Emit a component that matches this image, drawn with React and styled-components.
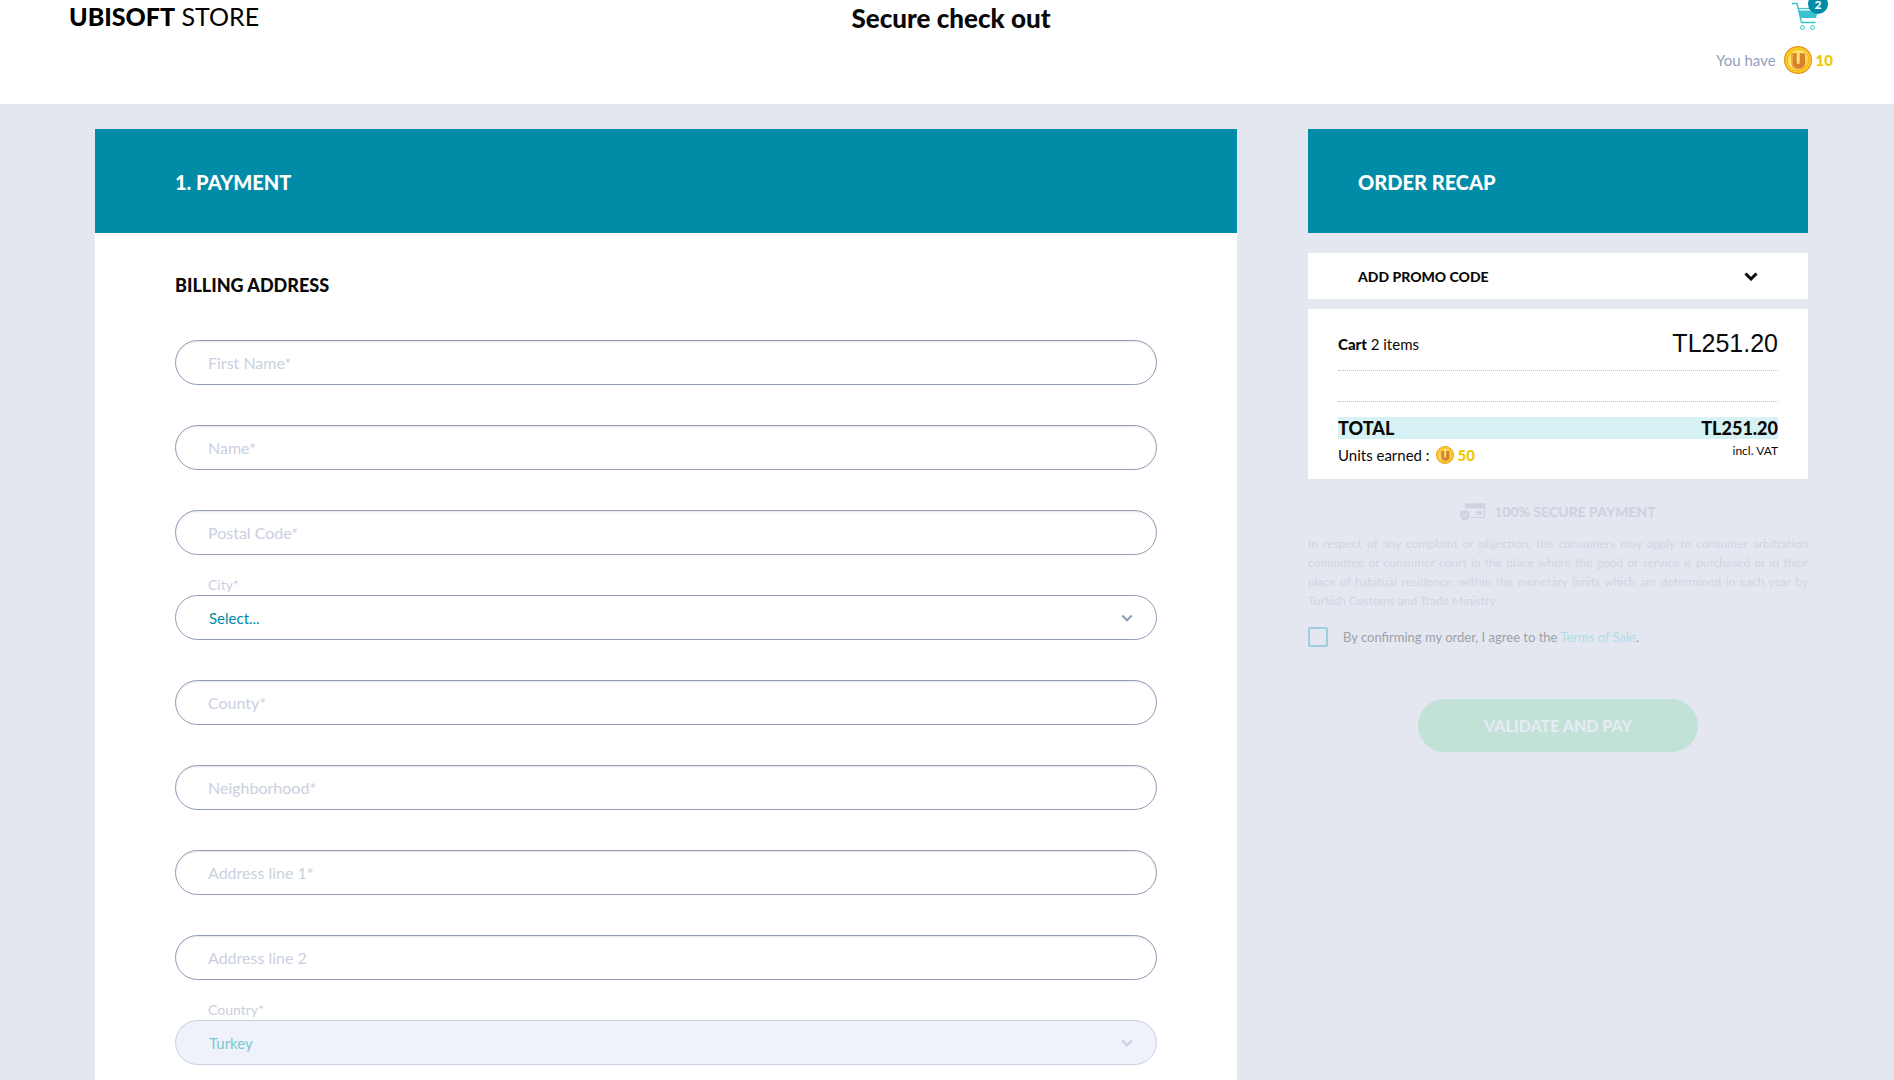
import React from "react";
import styled, { createGlobalStyle } from "styled-components";

// ============ Data ============== //
const FIELDS = [
  { id: "firstName", text: "First Name*" },
  { id: "name", text: "Name*" },
  { id: "postalCode", text: "Postal Code*" },
  { id: "city", text: "City*", options: ["Select..."] },
  { id: "county", text: "County*" },
  { id: "neighborhood", text: "Neighborhood*" },
  { id: "address1", text: "Address line 1*" },
  { id: "address2", text: "Address line 2" },
  { id: "country", text: "Country*", options: ["Turkey"], disabled: true },
];

// ============ CSS ============== //
const GlobalStyle = createGlobalStyle`
  * {
    box-sizing: border-box;
  }
  body {
    margin: 0;
    background: #e4e7f0;
    color: #0a0a0a;
    font-family: Lato, "Liberation Sans", sans-serif;
    font-size: 15px;
  }
  h1, h2, h3, p {
    margin: 0;
  }
  button, input, select {
    font-family: inherit;
  }
`;

const Header = styled.header`
  display: grid;
  grid-template-columns: 1fr auto 1fr;
  align-items: start;
  height: 104px;
  padding: 0 61px 0 69px;
  background: #fff;
`;

const Logo = styled.a`
  color: #000;
  font-size: 25px;
  line-height: 32px;
  text-decoration: none;
`;

const LogoBold = styled.span`
  font-weight: 900;
`;

const PageTitle = styled.h1`
  padding-top: 2px;
  font-size: 26px;
  font-weight: 900;
  line-height: 32px;
`;

const Account = styled.div`
  display: flex;
  flex-direction: column;
  align-items: flex-end;
  gap: 14px;
`;

const CartLink = styled.a`
  position: relative;
  display: block;
  height: 32px;
  margin-right: 15px;
`;

const Badge = styled.span`
  position: absolute;
  top: -6px;
  right: -10px;
  width: 20px;
  height: 20px;
  padding-top: 3px;
  border-radius: 50%;
  background: #008ba6;
  color: #fff;
  font-size: 12px;
  font-weight: 900;
  line-height: 16px;
  text-align: center;
`;

const Units = styled.p`
  display: flex;
  align-items: center;
  gap: 4px;
  color: #93a0bb;
`;

const UnitsText = styled.span`
  margin-right: 4px;
`;

const UnitsValue = styled.span`
  color: #eec800;
  font-weight: 900;
`;

const Main = styled.main`
  display: grid;
  grid-template-columns: minmax(0, 1fr) 500px;
  gap: 71px;
  min-height: calc(100vh - 104px);
  padding: 25px 86px 0 95px;
`;

const Card = styled.section`
  background: #fff;
`;

const Banner = styled.h2`
  display: flex;
  align-items: center;
  height: 104px;
  padding: 2px ${(props) => props.$pad} 0;
  background: #008ba6;
  color: #fff;
  font-size: 20px;
  font-weight: 900;
`;

const Form = styled.form`
  padding: 40px 80px 15px;
`;

const SubTitle = styled.h3`
  font-size: 18px;
  font-weight: 900;
  line-height: 24px;
`;

const Fields = styled.div`
  padding-top: 3px;
`;

const Field = styled.div`
  display: grid;
  grid-template-rows: 40px 45px;
`;

const Label = styled.label`
  grid-row: 1;
  align-self: end;
  padding-left: 33px;
  color: #cad0e0;
  font-size: 14px;
  line-height: 20px;
`;

const Input = styled.input`
  grid-row: 2;
  width: 100%;
  padding: 0 32px;
  border: 1px solid #919db8;
  border-radius: 23px;
  outline: none;
  background: #fff;
  box-shadow: inset 0 1px 2px rgba(0, 0, 0, 0.1);
  color: #008ba6;
  font-size: 16px;

  &::placeholder {
    color: #cad0e0;
    opacity: 1;
  }
`;

const SelectBox = styled.div`
  grid-row: 2;
  display: grid;
  align-items: center;
  color: ${(props) => (props.$disabled ? "#c9d0df" : "#919db8")};

  svg {
    grid-area: 1 / 1;
    justify-self: end;
    margin-right: 24px;
    pointer-events: none;
  }
`;

const Select = styled.select`
  grid-area: 1 / 1;
  width: 100%;
  height: 45px;
  padding: 0 33px;
  border: 1px solid ${(props) => (props.disabled ? "#c9d0df" : "#919db8")};
  border-radius: 23px;
  outline: none;
  appearance: none;
  background: ${(props) => (props.disabled ? "#eff2fa" : "#fff")};
  color: ${(props) => (props.disabled ? "#80c5d3" : "#008ba6")};
  font-size: 15px;
  opacity: 1;
`;

const PromoButton = styled.button`
  display: flex;
  align-items: center;
  justify-content: space-between;
  width: 100%;
  height: 46px;
  margin-top: 20px;
  padding: 0 50px;
  border: 0;
  background: #fff;
  color: #0a0a0a;
  font-size: 14px;
  font-weight: 900;
`;

const Recap = styled.section`
  margin-top: 10px;
  padding: 20px 30px 9px;
  background: #fff;
`;

const RecapRow = styled.div`
  display: flex;
  align-items: center;
  justify-content: space-between;
  height: 31px;
`;

const CartLine = styled(RecapRow)`
  height: 42px;
  padding-bottom: 12px;
  border-bottom: 1px dotted #7fd9df;
`;

const CartCount = styled.span`
  b {
    font-weight: 900;
  }
`;

const ShippingLine = styled(RecapRow)`
  border-bottom: 1px dotted #7fd9df;
`;

const Price = styled.span`
  font-family: "Liberation Sans", Arial, sans-serif;
  font-size: 25px;
`;

const TotalLine = styled(RecapRow)`
  height: 22px;
  margin-top: 15px;
  background: #d7f2f5;
  font-size: 18px;
  font-weight: 900;
`;

const EarnedText = styled.span`
  margin-right: 2px;
  color: #0a0a0a;
`;

const Vat = styled.span`
  align-self: flex-start;
  padding-top: 5px;
  font-size: 12px;
  line-height: 14px;
`;

const Secure = styled.p`
  display: flex;
  align-items: center;
  justify-content: center;
  gap: 8px;
  margin-top: 22px;
  color: #cdd3e0;
  font-size: 14px;
  font-weight: 900;
  line-height: 22px;
`;

const Legal = styled.p`
  margin-top: 11px;
  color: #d0d5e1;
  font-size: 12px;
  line-height: 19px;
  text-align: justify;
`;

const Terms = styled.div`
  display: flex;
  align-items: center;
  gap: 15px;
  margin-top: 17px;
  color: #9d9fa8;
  font-size: 13px;
  line-height: 20px;
`;

const Checkbox = styled.input`
  width: 20px;
  height: 20px;
  margin: 0;
  border: 2px solid #9dcedb;
  border-radius: 2px;
  appearance: none;
`;

const TermsLink = styled.a`
  color: #aedde8;
  text-decoration: none;
`;

const PayButton = styled.button`
  display: block;
  width: 280px;
  height: 53px;
  margin: 52px auto 0;
  border: 0;
  border-radius: 27px;
  background: #c2e2d8;
  color: #e6eaf2;
  font-size: 16px;
  font-weight: 900;
`;

const Icon = styled.svg`
  display: block;
  flex: none;
`;

// ============ Icons ============== //
const CartIcon = () => (
  <Icon width="26" height="32" viewBox="0 0 26 32" fill="none">
    <path d="M0 3.5h5l4.500 19h14" stroke="#38c1cf" strokeWidth="1.300" />
    <path d="M6.500 10.500h19.500l-2 7.500H8.300z" fill="#38c1cf" />
    <path d="M5.800 8.500h20" stroke="#38c1cf" strokeWidth="1.200" />
    <circle cx="10.500" cy="27.500" r="2" stroke="#38c1cf" />
    <circle cx="20.500" cy="27.500" r="2" stroke="#38c1cf" />
  </Icon>
);

const Coin = ({ size }) => (
  <Icon width={size} height={size} viewBox="0 0 28 28">
    <defs>
      <linearGradient id="coinFace" x1="0" y1="0" x2="1" y2="1">
        <stop offset="0" stopColor="#ffcf1a" />
        <stop offset="0.450" stopColor="#fce97c" />
        <stop offset="1" stopColor="#f9b80f" />
      </linearGradient>
    </defs>
    <circle cx="14" cy="14" r="13.400" fill="#ffd21c" stroke="#dd9128" strokeWidth="1.200" />
    <circle cx="14" cy="14" r="10.800" fill="url(#coinFace)" stroke="#eda51c" strokeWidth="0.800" />
    <path
      d="M7.500 7.200h5.200v9.300q0 1.700 1.500 1.700t1.500-1.700V7.200h5.300v9.500q0 6.100-6.800 6.100t-6.700-6.100z"
      fill="#d9812a"
    />
    <path d="M8.500 7.700v9q0 4 3.500 5" fill="none" stroke="#f3b04a" strokeWidth="0.900" />
  </Icon>
);

const Chevron = ({ width, height, stroke }) => (
  <Icon width={width} height={height} viewBox="0 0 14 9" fill="none">
    <path d="M1.500 1.500 7 7l5.500-5.500" stroke="currentColor" strokeWidth={stroke} />
  </Icon>
);

const SecureIcon = () => (
  <Icon width="26" height="18" viewBox="0 0 26 18">
    <path d="M5.500 1h19v13.500H11" fill="none" stroke="#cdd3e0" strokeWidth="1.200" />
    <path d="M5 .500h20.500V5.500H5z" fill="#cdd3e0" />
    <circle cx="17.500" cy="10" r="2" fill="#cdd3e0" />
    <circle cx="20.500" cy="10" r="2" fill="#cdd3e0" />
    <path d="M.500 8.500 5 7l4.500 1.500V13q0 3-4.500 4.800Q.500 16 .500 13z" fill="#cdd3e0" />
    <path d="m3 12 1.500 1.500L7.300 10.800" fill="none" stroke="#e4e7f0" strokeWidth="1.200" />
  </Icon>
);

// ============ Form Field ============== //
const FormField = ({ id, text, options, disabled }) => {
  if (!options) {
    return (
      <Field>
        <Input id={id} type="text" placeholder={text} aria-label={text} />
      </Field>
    );
  }
  return (
    <Field>
      <Label htmlFor={id}>{text}</Label>
      <SelectBox $disabled={disabled}>
        <Select id={id} disabled={disabled}>
          {options.map((option) => (
            <option key={option}>{option}</option>
          ))}
        </Select>
        <Chevron width={12} height={8} stroke={2.5} />
      </SelectBox>
    </Field>
  );
};

// ============ Function ============== //
const App = () => {
  // ============ Layout
  return (
    <>
      <GlobalStyle />
      <Header>
        <Logo href="#">
          <LogoBold>UBISOFT</LogoBold> STORE
        </Logo>
        <PageTitle>Secure check out</PageTitle>
        <Account>
          <CartLink href="#" aria-label="Cart">
            <CartIcon />
            <Badge>2</Badge>
          </CartLink>
          <Units>
            <UnitsText>You have</UnitsText>
            <Coin size={28} />
            <UnitsValue>10</UnitsValue>
          </Units>
        </Account>
      </Header>
      <Main>
        <Card>
          <Banner $pad="80px">1. PAYMENT</Banner>
          <Form>
            <SubTitle>BILLING ADDRESS</SubTitle>
            <Fields>
              {FIELDS.map((field) => (
                <FormField key={field.id} {...field} />
              ))}
            </Fields>
          </Form>
        </Card>
        <aside>
          <Banner $pad="50px">ORDER RECAP</Banner>
          <PromoButton type="button">
            ADD PROMO CODE
            <Chevron width={14} height={9} stroke={3} />
          </PromoButton>
          <Recap>
            <CartLine>
              <CartCount>
                <b>Cart</b> 2 items
              </CartCount>
              <Price>TL251.20</Price>
            </CartLine>
            <ShippingLine />
            <TotalLine>
              <span>TOTAL</span>
              <span>TL251.20</span>
            </TotalLine>
            <RecapRow>
              <Units>
                <EarnedText>Units earned :</EarnedText>
                <Coin size={18} />
                <UnitsValue>50</UnitsValue>
              </Units>
              <Vat>incl. VAT</Vat>
            </RecapRow>
          </Recap>
          <Secure>
            <SecureIcon />
            100% SECURE PAYMENT
          </Secure>
          <Legal>
            In respect of any complaint or objection, the consumers may apply to consumer arbitration
            committee or consumer court in the place where the good or service is purchased or in their
            place of habitual residence, within the monetary limits which are determined in each year by
            Turkish Customs and Trade Ministry
          </Legal>
          <Terms>
            <Checkbox id="terms" type="checkbox" />
            <label htmlFor="terms">
              By confirming my order, I agree to the <TermsLink href="#">Terms of Sale</TermsLink>.
            </label>
          </Terms>
          <PayButton type="submit">VALIDATE AND PAY</PayButton>
        </aside>
      </Main>
    </>
  );
};

export default App;
